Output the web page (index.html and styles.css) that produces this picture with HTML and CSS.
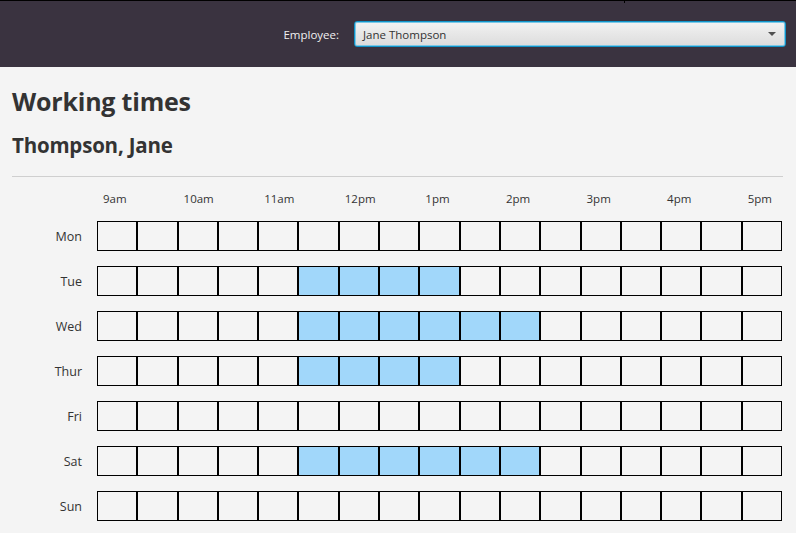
FILE: index.html
```html
<!DOCTYPE html>
<html lang="en">
<head>
<meta charset="utf-8">
<title>Working times</title>
<link rel="stylesheet" href="styles.css">
</head>
<body>
<header class="topbar">
  <span class="tick"></span>
  <label class="field-label" for="emp">Employee:</label>
  <div class="combo" id="emp" tabindex="0">
    <span class="combo-text">Jane Thompson</span>
    <svg class="combo-arrow" width="8" height="4" viewBox="0 0 8 4"><path d="M0 0H8L4 4Z" fill="#505050"/></svg>
  </div>
</header>
<main class="content">
  <h1 class="title">Working times</h1>
  <h2 class="subtitle">Thompson, Jane</h2>
  <hr class="divider">
  <div class="schedule">
    <div class="corner"></div>
    <div class="time">9am</div><div></div>
    <div class="time">10am</div><div></div>
    <div class="time">11am</div><div></div>
    <div class="time">12pm</div><div></div>
    <div class="time">1pm</div><div></div>
    <div class="time">2pm</div><div></div>
    <div class="time">3pm</div><div></div>
    <div class="time">4pm</div><div></div>
    <div class="time">5pm</div>

    <div class="day">Mon</div>
    <div class="cell"></div><div class="cell"></div><div class="cell"></div><div class="cell"></div><div class="cell"></div><div class="cell"></div><div class="cell"></div><div class="cell"></div><div class="cell"></div><div class="cell"></div><div class="cell"></div><div class="cell"></div><div class="cell"></div><div class="cell"></div><div class="cell"></div><div class="cell"></div><div class="cell"></div>

    <div class="day">Tue</div>
    <div class="cell"></div><div class="cell"></div><div class="cell"></div><div class="cell"></div><div class="cell"></div><div class="cell on"></div><div class="cell on"></div><div class="cell on"></div><div class="cell on"></div><div class="cell"></div><div class="cell"></div><div class="cell"></div><div class="cell"></div><div class="cell"></div><div class="cell"></div><div class="cell"></div><div class="cell"></div>

    <div class="day">Wed</div>
    <div class="cell"></div><div class="cell"></div><div class="cell"></div><div class="cell"></div><div class="cell"></div><div class="cell on"></div><div class="cell on"></div><div class="cell on"></div><div class="cell on"></div><div class="cell on"></div><div class="cell on"></div><div class="cell"></div><div class="cell"></div><div class="cell"></div><div class="cell"></div><div class="cell"></div><div class="cell"></div>

    <div class="day">Thur</div>
    <div class="cell"></div><div class="cell"></div><div class="cell"></div><div class="cell"></div><div class="cell"></div><div class="cell on"></div><div class="cell on"></div><div class="cell on"></div><div class="cell on"></div><div class="cell"></div><div class="cell"></div><div class="cell"></div><div class="cell"></div><div class="cell"></div><div class="cell"></div><div class="cell"></div><div class="cell"></div>

    <div class="day">Fri</div>
    <div class="cell"></div><div class="cell"></div><div class="cell"></div><div class="cell"></div><div class="cell"></div><div class="cell"></div><div class="cell"></div><div class="cell"></div><div class="cell"></div><div class="cell"></div><div class="cell"></div><div class="cell"></div><div class="cell"></div><div class="cell"></div><div class="cell"></div><div class="cell"></div><div class="cell"></div>

    <div class="day">Sat</div>
    <div class="cell"></div><div class="cell"></div><div class="cell"></div><div class="cell"></div><div class="cell"></div><div class="cell on"></div><div class="cell on"></div><div class="cell on"></div><div class="cell on"></div><div class="cell on"></div><div class="cell on"></div><div class="cell"></div><div class="cell"></div><div class="cell"></div><div class="cell"></div><div class="cell"></div><div class="cell"></div>

    <div class="day">Sun</div>
    <div class="cell"></div><div class="cell"></div><div class="cell"></div><div class="cell"></div><div class="cell"></div><div class="cell"></div><div class="cell"></div><div class="cell"></div><div class="cell"></div><div class="cell"></div><div class="cell"></div><div class="cell"></div><div class="cell"></div><div class="cell"></div><div class="cell"></div><div class="cell"></div><div class="cell"></div>
  </div>
</main>
</body>
</html>
```

FILE: styles.css
```css
* { box-sizing: border-box; }
html, body {
  margin: 0;
  padding: 0;
  background: #f4f4f4;
  font-family: "Open Sans", "Noto Sans", sans-serif;
  color: #333;
  overflow: hidden;
}
.topbar {
  position: relative;
  height: 67px;
  background: #3a3340;
  border-top: 1px solid #000;
  display: flex;
  align-items: center;
  justify-content: flex-end;
  padding: 0 10px 0 0;
}
.tick {
  position: absolute;
  left: 624px;
  top: 0;
  width: 1px;
  height: 2px;
  background: #000;
}
.field-label {
  color: #f0f0f0;
  font-size: 11.5px;
  margin-right: 15px;
}
.combo {
  width: 432px;
  height: 26px;
  border: 1px solid #0f93c8;
  border-radius: 3px;
  box-shadow: inset 0 0 0 1px #7cc8e6;
  background: linear-gradient(#f2f2f2, #dcdcdc);
  display: flex;
  align-items: center;
  justify-content: space-between;
  padding: 0 9px 0 8px;
  outline: none;
}
.combo-text {
  font-size: 11.5px;
  color: #333;
}
.combo-arrow { display: block; }
.content {
  padding: 16px 13px 0 12px;
}
.title {
  margin: 0;
  font-size: 25px;
  font-weight: 700;
  line-height: 36px;
  letter-spacing: -0.2px;
}
.subtitle {
  margin: 12px 0 0;
  font-size: 20.5px;
  font-weight: 700;
  line-height: 28px;
  letter-spacing: -0.2px;
}
.divider {
  margin: 17px 0 0;
  border: 0;
  height: 1px;
  background: #cfcfcf;
}
.schedule {
  margin-top: 15px;
  display: grid;
  grid-template-columns: 85px repeat(17, 1fr);
  grid-template-rows: 14px repeat(7, 30px);
  row-gap: 15px;
  margin-right: 1px;
}
.time {
  font-size: 11.5px;
  line-height: 14px;
  padding-left: 6px;
  white-space: nowrap;
}
.day {
  font-size: 12.5px;
  text-align: right;
  padding-right: 15px;
  align-self: center;
}
.cell {
  border: 1px solid #000;
  background: #f4f4f4;
}
.cell.on { background: #a1d7fa; }
```
